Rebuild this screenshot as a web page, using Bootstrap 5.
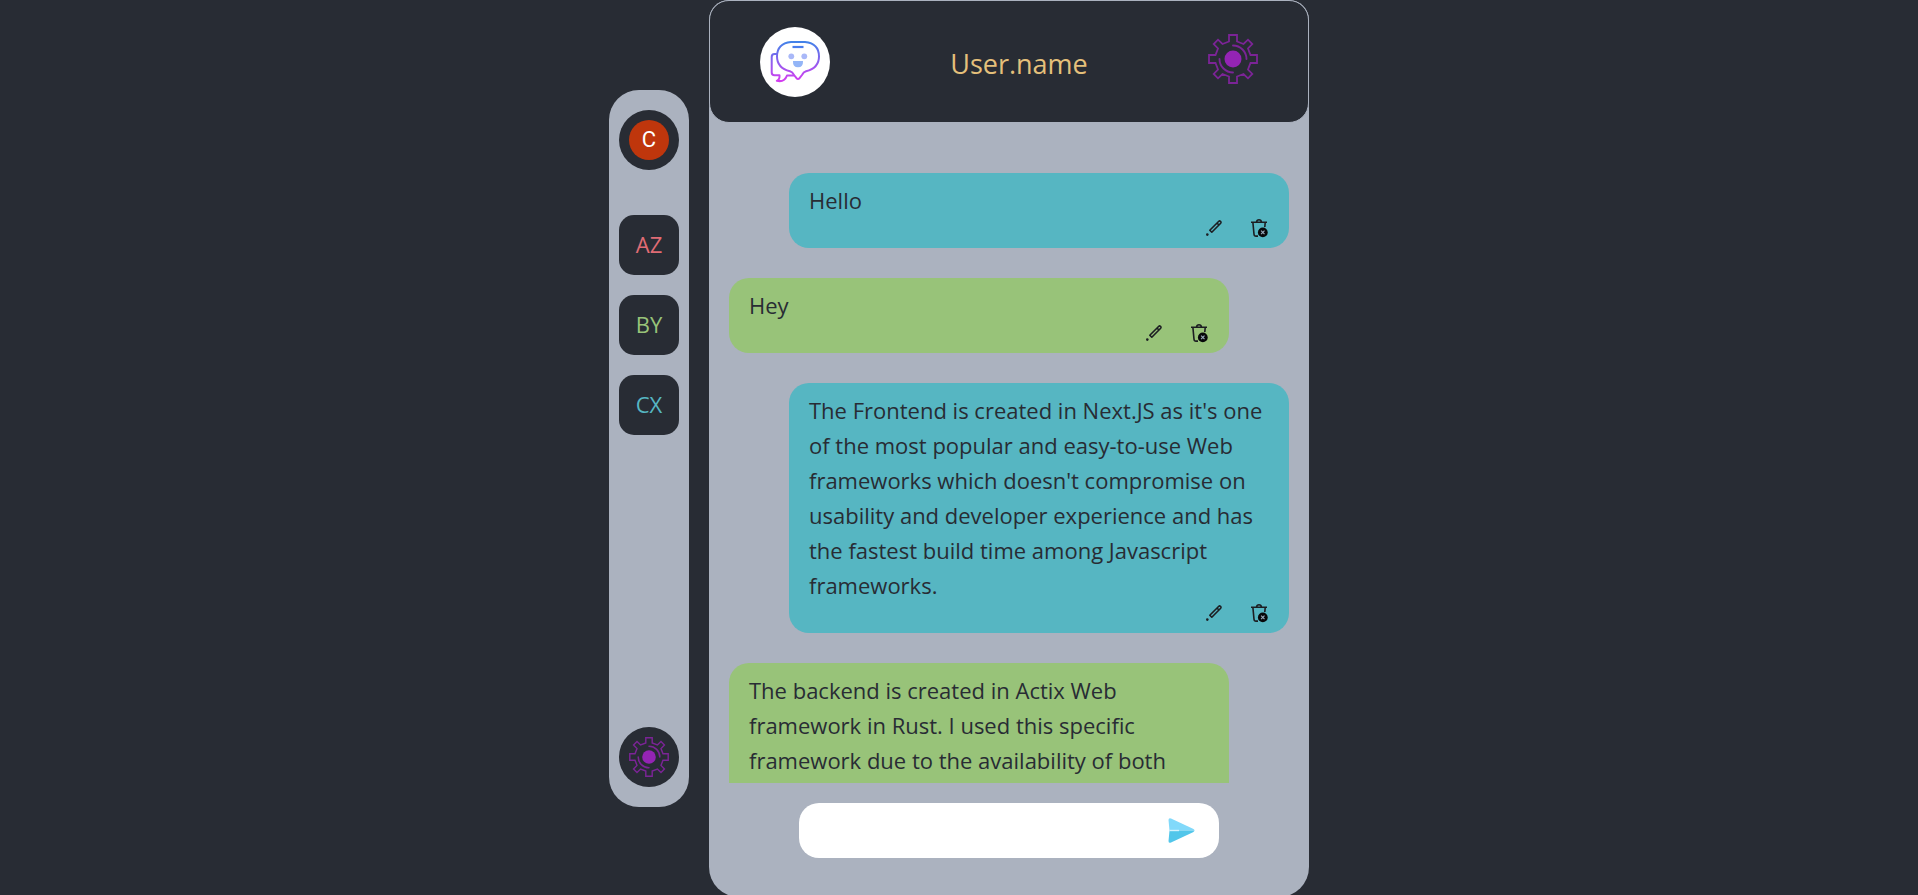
<!DOCTYPE html>
<html lang="en">
<head>
<meta charset="utf-8">
<meta name="viewport" content="width=device-width, initial-scale=1">
<title>Chat</title>
<link href="https://cdn.jsdelivr.net/npm/bootstrap@5.3.0/dist/css/bootstrap.min.css" rel="stylesheet">
<style>
  :root { --ink: #282c34; --silver: #abb2bf; --teal: #56b6c2; --leaf: #98c379; }
  body { background: var(--ink); color: var(--ink); font-family: "Open Sans", "Noto Sans", sans-serif; overflow: hidden; }
  .shell { height: calc(100vh + 2px); gap: 20px; }
  .rail { width: 80px; height: 80%; background: var(--silver); border-radius: 30px; padding: 20px 10px; }
  .rail-list { gap: 20px; margin-top: 45px; }
  .tile { width: 60px; height: 60px; padding: 0; border: 0; background: var(--ink); font-size: 22px; line-height: 32px; }
  .tile-square { border-radius: 15px; padding-bottom: 2px; }
  .tile-a { color: #e06c75; }
  .tile-b { color: var(--leaf); }
  .tile-x { color: var(--teal); }
  .initial { width: 40px; height: 40px; background: #bf360c; color: #fff; font-family: Roboto, sans-serif; }
  .panel { width: 600px; max-width: calc(100vw - 120px); background: var(--silver); border-radius: 20px 20px 30px 30px; }
  .topbar { height: 123px; padding: 0 50px; background: var(--ink); border: 1px solid var(--silver); border-radius: 20px; }
  .topbar .plain-btn { margin-bottom: 6px; }
  .title { color: #e5c07b; font-size: 27px; line-height: 40px; padding-top: 4px; }
  .plain-btn { padding: 0; border: 0; background: none; line-height: 0; color: #1c1e22; }
  .feed { min-height: 0; padding: 50px 20px 0; gap: 30px; }
  .bubble { width: 500px; max-width: 90%; padding: 10px 20px; border-radius: 20px; font-size: 22px; line-height: 35px; }
  .bubble-me { background: var(--teal); }
  .bubble-you { background: var(--leaf); }
  .actions { gap: 25px; }
  .composer { width: 420px; max-width: 80%; height: 55px; margin: 20px 0 39px; padding: 0 24px; background: #fff; border-radius: 20px; }
  .composer input { border: 0; outline: 0; min-width: 0; font-size: 22px; }
</style>
</head>
<body>
<svg width="0" height="0" class="position-absolute" aria-hidden="true">
  <symbol id="gear" viewBox="0 0 50 50">
    <path d="M21 1H29V7.500L35.500 10 40 5.700 44.300 10 40 14.500 42.500 21H49V29H42.500L40 35.500 44.300 40 40 44.300 35.500 40 29 42.500V49H21V42.500L14.500 40 10 44.300 5.700 40 10 35.500 7.500 29H1V21H7.500L10 14.500 5.700 10 10 5.700 14.500 10 21 7.500Z" fill="none" stroke="#7b2496" stroke-width="1.800"/>
    <path d="M25 11.500A13.500 13.500 0 0 1 38.500 25M25 38.500A13.500 13.500 0 0 1 11.500 25" fill="none" stroke="#7b2496" stroke-width="1.900" stroke-linecap="round"/>
    <circle cx="25" cy="25" r="8.500" fill="#9424b4"/>
  </symbol>
  <symbol id="pencil" viewBox="0 0 20 20">
    <path d="M5.800 12.200 14.800 3.300q.800-.700 1.600 0l.300.300q.700.800 0 1.600L7.800 14.200ZM13 5l2 2" fill="none" stroke="currentColor" stroke-width="1.600" stroke-linejoin="round"/>
    <circle cx="3.300" cy="16.600" r="1.300" fill="currentColor"/>
  </symbol>
  <symbol id="bin" viewBox="0 0 20 20">
    <path d="M2 4.300H18M7.500 4q.300-2.200 2.500-2.200T12.500 4M3.900 4.500 5 16.200q.200 1.900 2 1.900H9M16.200 4.500 15.800 9" fill="none" stroke="currentColor" stroke-width="1.600"/>
    <circle cx="13.800" cy="14.400" r="4.900" fill="#08090b"/>
    <path d="m12.100 12.700 3.400 3.400m0-3.400-3.400 3.400" stroke="#9ab" stroke-width="1.200"/>
  </symbol>
</svg>

<div class="shell d-flex justify-content-center align-items-center">
  <nav class="rail d-flex flex-column align-items-center" aria-label="Chats">
    <button type="button" class="tile rounded-circle d-flex align-items-center justify-content-center" aria-label="Account"><span class="initial rounded-circle d-flex align-items-center justify-content-center">C</span></button>
    <div class="rail-list d-flex flex-column">
      <button type="button" class="tile tile-square tile-a">AZ</button>
      <button type="button" class="tile tile-square tile-b">BY</button>
      <button type="button" class="tile tile-square tile-x">CX</button>
    </div>
    <button type="button" class="tile rounded-circle d-flex align-items-center justify-content-center mt-auto" aria-label="Settings"><svg width="40" height="40"><use href="#gear"/></svg></button>
  </nav>

  <main class="panel d-flex flex-column align-items-center h-100">
    <header class="topbar w-100 d-flex align-items-center justify-content-between flex-shrink-0">
      <svg width="70" height="70" viewBox="0 0 70 70" role="img" aria-label="Chat bot">
        <defs>
          <linearGradient id="brand-line" gradientUnits="userSpaceOnUse" x1="0" y1="14" x2="0" y2="54">
            <stop offset="0" stop-color="#3f83e8"/><stop offset=".5" stop-color="#8a60ee"/><stop offset="1" stop-color="#d43df0"/>
          </linearGradient>
        </defs>
        <circle cx="35" cy="35" r="35" fill="#fff"/>
        <g fill="none" stroke="url(#brand-line)" stroke-width="2" stroke-linejoin="round" stroke-linecap="round">
          <path d="M17 27H14.500Q11.700 27 11.700 30V45.500Q11.700 48.300 14.500 48.300H19.500Q20 52.200 16.800 53.800 24.500 55.500 27 48.500H34"/>
          <path d="M31 15H45Q59 16.500 59 29.500 59 41 46 44.300 43.500 45 42 48L39.500 51.200Q38 52.800 36.500 51.200L34 48Q32.500 45 30 44.300 17 41 17 29.500 17 16.500 31 15Z"/>
        </g>
        <path d="M32.500 20H43.500" stroke="#4a7dec" stroke-width="2.200"/>
        <circle cx="31.300" cy="29.300" r="2.900" fill="#a9b8f8"/>
        <circle cx="44.300" cy="29.300" r="2.900" fill="#a9b8f8"/>
        <path d="M33 34H43Q43.300 40.300 38 40.300T33 34Z" fill="#93b5f7"/>
      </svg>
      <h1 class="title mb-0 fw-normal">User.name</h1>
      <button type="button" class="plain-btn" aria-label="Settings"><svg width="50" height="50"><use href="#gear"/></svg></button>
    </header>

    <section class="feed w-100 flex-grow-1 overflow-hidden d-flex flex-column" aria-label="Messages">
      <article class="bubble bubble-me flex-shrink-0 align-self-end">
        <p class="mb-0">Hello</p>
        <div class="actions d-flex justify-content-end">
          <button type="button" class="plain-btn" aria-label="Edit"><svg width="20" height="20"><use href="#pencil"/></svg></button>
          <button type="button" class="plain-btn" aria-label="Delete"><svg width="20" height="20"><use href="#bin"/></svg></button>
        </div>
      </article>
      <article class="bubble bubble-you flex-shrink-0">
        <p class="mb-0">Hey</p>
        <div class="actions d-flex justify-content-end">
          <button type="button" class="plain-btn" aria-label="Edit"><svg width="20" height="20"><use href="#pencil"/></svg></button>
          <button type="button" class="plain-btn" aria-label="Delete"><svg width="20" height="20"><use href="#bin"/></svg></button>
        </div>
      </article>
      <article class="bubble bubble-me flex-shrink-0 align-self-end">
        <p class="mb-0">The Frontend is created in Next.JS as it's one of the most popular and easy-to-use Web frameworks which doesn't compromise on usability and developer experience and has the fastest build time among Javascript frameworks.</p>
        <div class="actions d-flex justify-content-end">
          <button type="button" class="plain-btn" aria-label="Edit"><svg width="20" height="20"><use href="#pencil"/></svg></button>
          <button type="button" class="plain-btn" aria-label="Delete"><svg width="20" height="20"><use href="#bin"/></svg></button>
        </div>
      </article>
      <article class="bubble bubble-you flex-shrink-0 pb-5">
        <p class="mb-0">The backend is created in Actix Web framework in Rust. I used this specific framework due to the availability of both</p>
      </article>
    </section>

    <form class="composer d-flex align-items-center flex-shrink-0">
      <input type="text" class="flex-grow-1 bg-transparent p-0" aria-label="Message">
      <button type="button" class="plain-btn" aria-label="Send">
        <svg width="27" height="25" viewBox="0 0 27 25">
          <path d="M.500 2Q.600-.500 3 .400L25 10.800Q26.500 11.600 26.500 12.500H1.500Z" fill="#81d9fa"/>
          <path d="M.500 23Q.600 25.500 3 24.600L25 14.200Q26.500 13.400 26.500 12.500H1.500Z" fill="#52c6ea"/>
          <path d="M1.500 12.500H11" stroke="#d5f3fd" stroke-width="1.400"/>
        </svg>
      </button>
    </form>
  </main>
</div>
<script src="https://cdn.jsdelivr.net/npm/bootstrap@5.3.0/dist/js/bootstrap.bundle.min.js"></script>
</body>
</html>
